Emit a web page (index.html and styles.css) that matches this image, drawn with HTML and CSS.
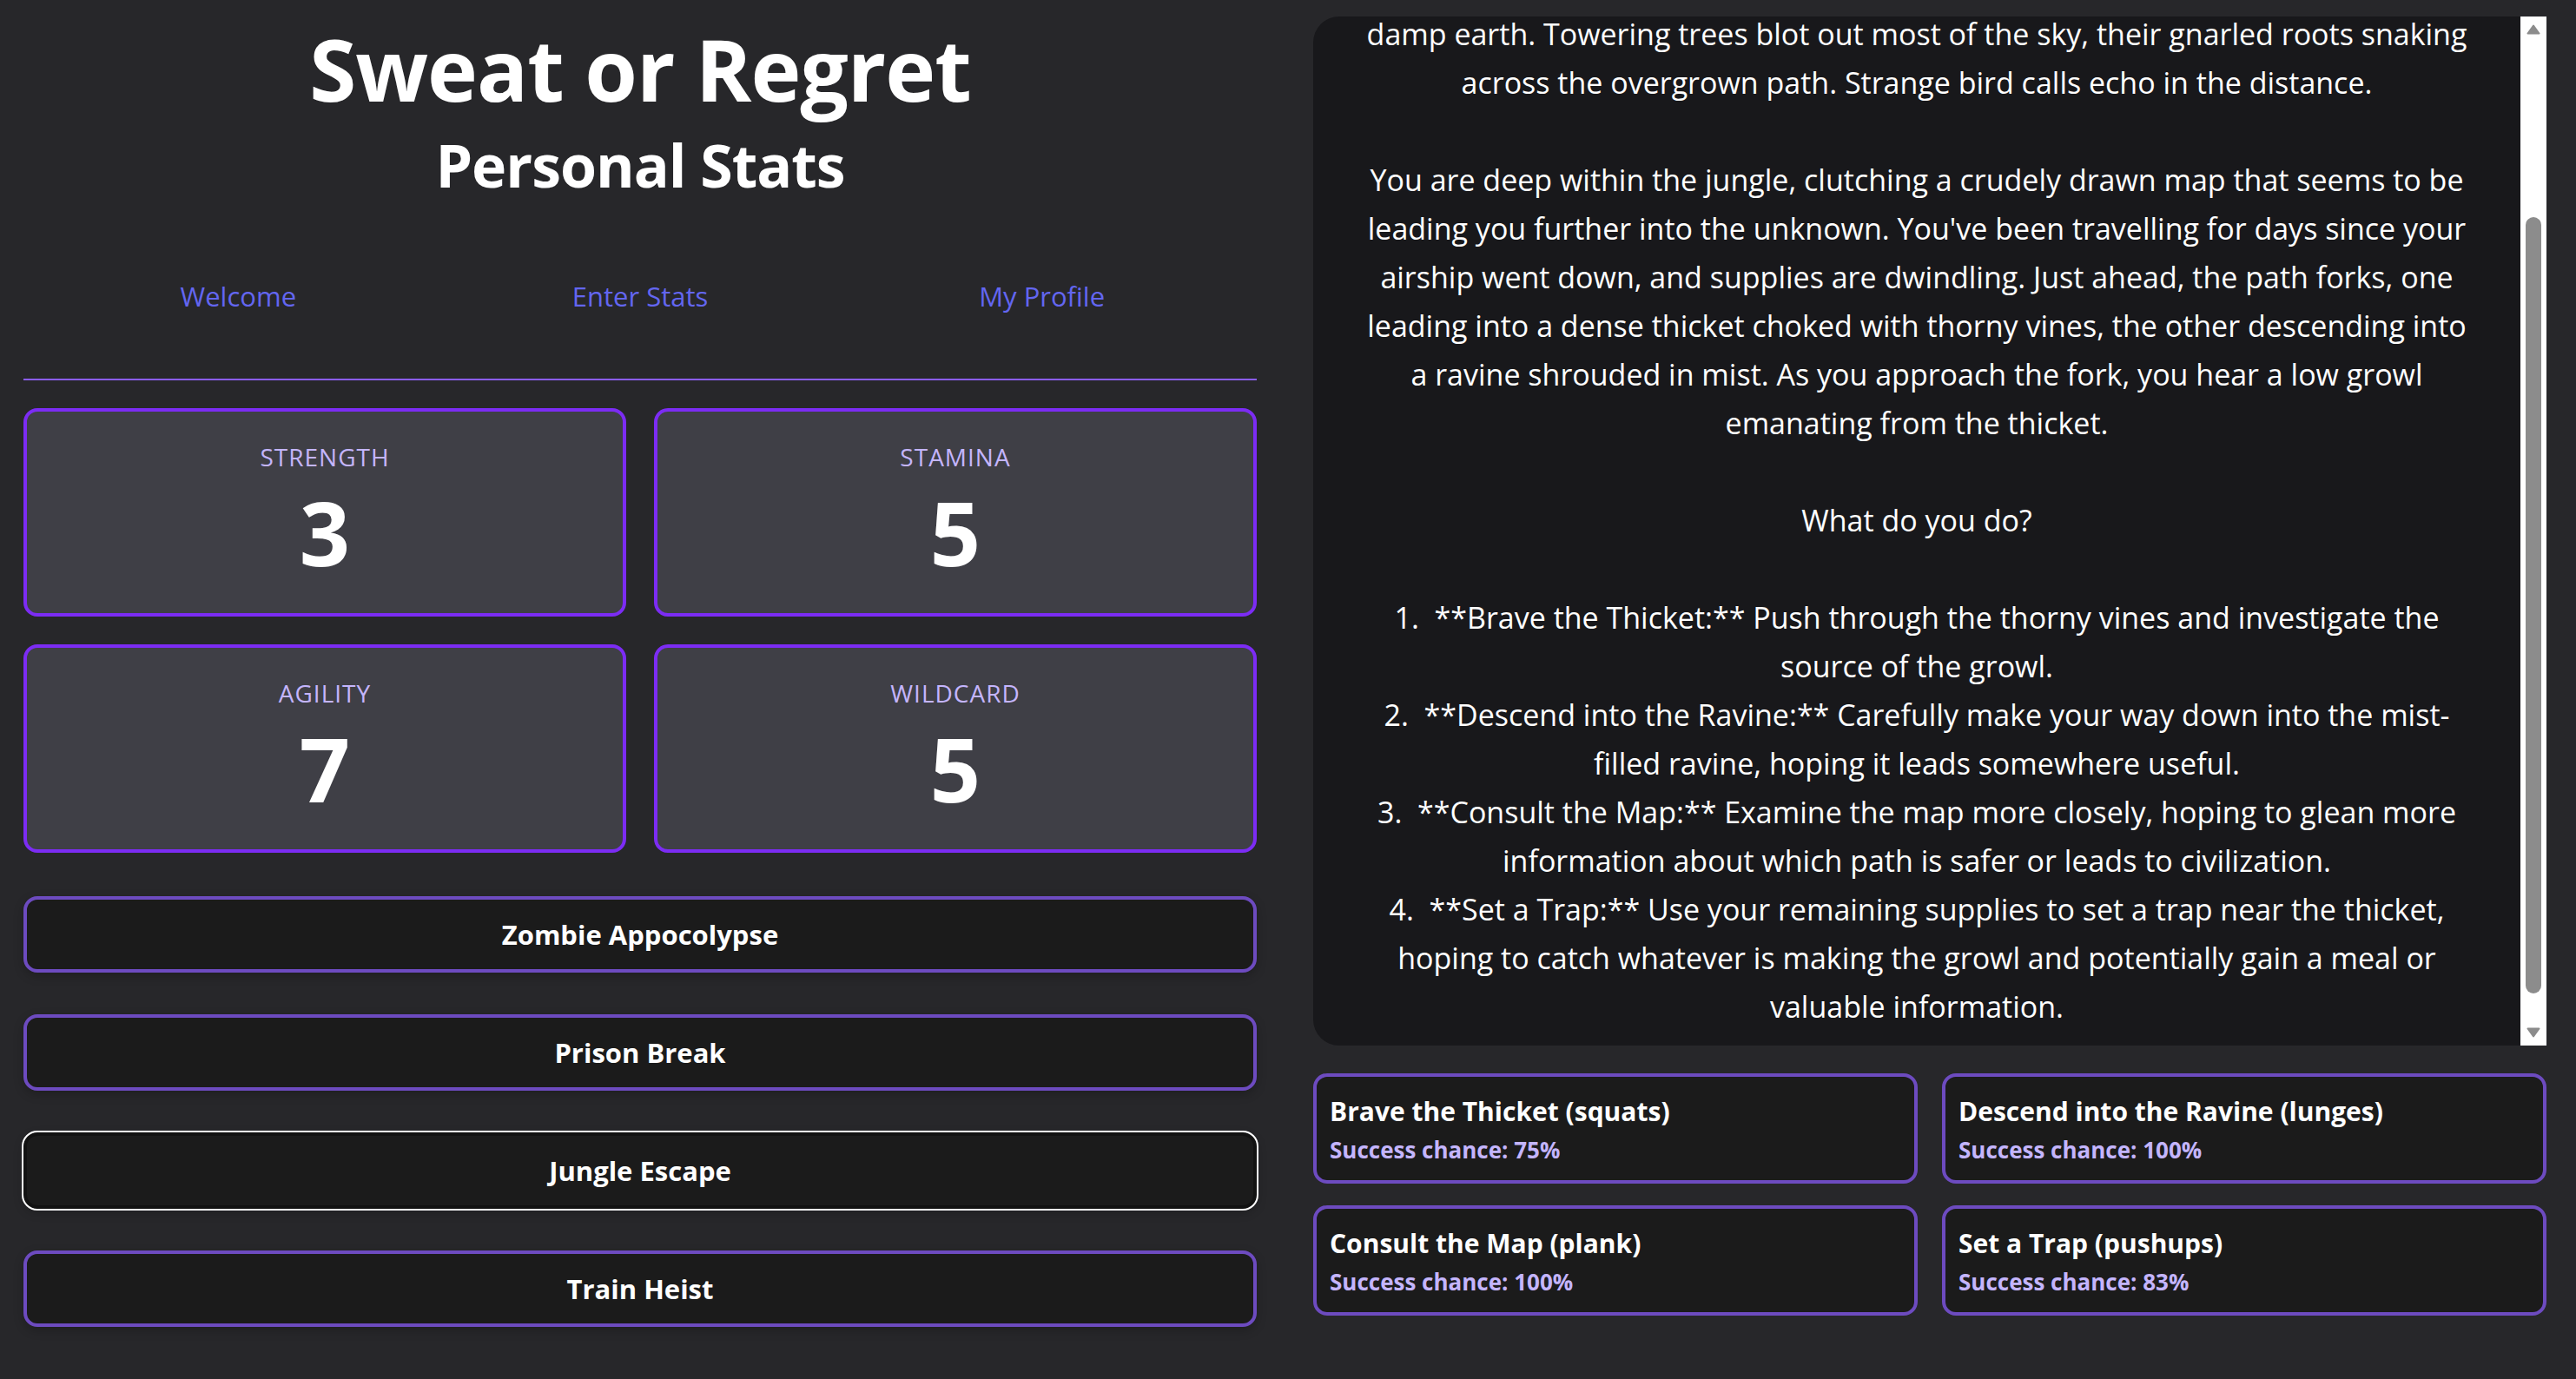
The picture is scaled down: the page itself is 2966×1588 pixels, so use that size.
FILE: index.html
```html
<!DOCTYPE html>
<html lang="en">
<head>
<meta charset="utf-8">
<title>Sweat or Regret</title>
<link rel="stylesheet" href="styles.css">
</head>
<body>
<main class="app">
  <section class="left">
    <h1 class="title">Sweat or Regret</h1>
    <h2 class="subtitle">Personal Stats</h2>
    <nav class="nav">
      <a href="#" class="nav-link">Welcome</a>
      <a href="#" class="nav-link">Enter Stats</a>
      <a href="#" class="nav-link">My Profile</a>
    </nav>
    <div class="stats">
      <div class="stat-card"><div class="stat-label">Strength</div><div class="stat-value">3</div></div>
      <div class="stat-card"><div class="stat-label">Stamina</div><div class="stat-value">5</div></div>
      <div class="stat-card"><div class="stat-label">Agility</div><div class="stat-value">7</div></div>
      <div class="stat-card"><div class="stat-label">Wildcard</div><div class="stat-value">5</div></div>
    </div>
    <div class="scenarios">
      <button class="scenario">Zombie Appocolypse</button>
      <button class="scenario">Prison Break</button>
      <button class="scenario scenario-active">Jungle Escape</button>
      <button class="scenario">Train Heist</button>
    </div>
  </section>
  <section class="right">
    <div class="story">
      <div class="story-scroll" id="story"><div class="story-text">damp earth. Towering trees blot out most of the sky, their gnarled roots snaking across the overgrown path. Strange bird calls echo in the distance.

You are deep within the jungle, clutching a crudely drawn map that seems to be leading you further into the unknown. You've been travelling for days since your airship went down, and supplies are dwindling. Just ahead, the path forks, one leading into a dense thicket choked with thorny vines, the other descending into a ravine shrouded in mist. As you approach the fork, you hear a low growl emanating from the thicket.

What do you do?

1.  **Brave the Thicket:** Push through the thorny vines and investigate the source of the growl.
2.  **Descend into the Ravine:** Carefully make your way down into the mist-filled ravine, hoping it leads somewhere useful.
3.  **Consult the Map:** Examine the map more closely, hoping to glean more information about which path is safer or leads to civilization.
4.  **Set a Trap:** Use your remaining supplies to set a trap near the thicket, hoping to catch whatever is making the growl and potentially gain a meal or valuable information.</div></div>
      <div class="scrollbar" aria-hidden="true">
        <div class="sb-button">
          <svg class="sb-arrow" width="16" height="12" viewBox="0 0 16 12"><path d="M8 1.5 L14.5 10.5 L1.5 10.5 Z" fill="#8c8c8c" stroke="#8c8c8c" stroke-width="2" stroke-linejoin="round"/></svg>
        </div>
        <div class="sb-track"><div class="sb-thumb"></div></div>
        <div class="sb-button">
          <svg class="sb-arrow" width="16" height="12" viewBox="0 0 16 12"><path d="M8 10.5 L14.5 1.5 L1.5 1.5 Z" fill="#8c8c8c" stroke="#8c8c8c" stroke-width="2" stroke-linejoin="round"/></svg>
        </div>
      </div>
    </div>
    <div class="choices">
      <div class="choice"><div class="choice-title">Brave the Thicket (squats)</div><div class="choice-chance">Success chance: 75%</div></div>
      <div class="choice"><div class="choice-title">Descend into the Ravine (lunges)</div><div class="choice-chance">Success chance: 100%</div></div>
      <div class="choice"><div class="choice-title">Consult the Map (plank)</div><div class="choice-chance">Success chance: 100%</div></div>
      <div class="choice"><div class="choice-title">Set a Trap (pushups)</div><div class="choice-chance">Success chance: 83%</div></div>
    </div>
  </section>
</main>
<script src="app.js"></script>
</body>
</html>
```
FILE: styles.css
```css
* { box-sizing: border-box; }

html, body {
  margin: 0;
  padding: 0;
  background: #27272a;
  height: 100%;
  overflow: hidden;
}

body {
  font-family: "Open Sans", "Noto Sans", sans-serif;
  color: #ffffff;
}

.app {
  display: grid;
  grid-template-columns: 1420px 1420px;
  column-gap: 65px;
  padding: 0 34px 0 27px;
}

/* ---------- left column ---------- */
.left {
  display: flex;
  flex-direction: column;
}

.title {
  margin: 19px 0 0;
  font-size: 98px;
  line-height: 120px;
  font-weight: 700;
  letter-spacing: -1px;
  text-align: center;
}

.subtitle {
  margin: 9px 0 0;
  font-size: 68px;
  line-height: 84px;
  font-weight: 700;
  letter-spacing: -1px;
  text-align: center;
}

.nav {
  display: grid;
  grid-template-columns: repeat(3, 1fr);
  padding: 87px 16px 73px;
  border-bottom: 2px solid #8b5cf6;
}

.nav-link {
  text-align: center;
  color: #6366f1;
  text-decoration: none;
  font-size: 31px;
  line-height: 44px;
  font-weight: 500;
}

.stats {
  margin-top: 32px;
  display: grid;
  grid-template-columns: 1fr 1fr;
  gap: 32px;
}

.stat-card {
  background: #3f3f46;
  border: 4px solid #7c2cf4;
  border-radius: 16px;
  padding: 32px 16px;
  text-align: center;
}

.stat-label {
  font-size: 28px;
  line-height: 40px;
  letter-spacing: 1px;
  font-weight: 500;
  text-transform: uppercase;
  color: #c4b5fd;
  margin-bottom: 6px;
}

.stat-value {
  font-size: 102px;
  line-height: 122px;
  font-weight: 700;
  color: #ffffff;
}

.scenarios {
  margin-top: 50px;
  display: flex;
  flex-direction: column;
  gap: 48px;
}

.scenario {
  height: 88px;
  width: 100%;
  background: #1b1b1b;
  border: 4px solid #6d4bc0;
  border-radius: 16px;
  color: #ffffff;
  font-family: inherit;
  font-size: 31px;
  font-weight: 700;
  box-shadow: 0 4px 12px rgba(0, 0, 0, 0.22);
  cursor: pointer;
}

.scenario-active {
  border-color: #121212;
  outline: 2px solid #ffffff;
}

/* ---------- right column ---------- */
.right {
  padding-top: 19px;
  display: flex;
  flex-direction: column;
}

.story {
  height: 1185px;
  display: flex;
  background: #18181b;
  border-radius: 30px 0 0 30px;
  overflow: hidden;
}

.story-scroll {
  flex: 1;
  overflow: hidden;
}

.story-text {
  padding: 0 53px 57px;
  white-space: pre-wrap;
  text-align: center;
  font-size: 34px;
  line-height: 56px;
  color: #ffffff;
}

.scrollbar {
  width: 30px;
  flex: none;
  display: flex;
  flex-direction: column;
  background: #ffffff;
}

.sb-button {
  height: 30px;
  flex: none;
  display: flex;
  align-items: center;
  justify-content: center;
}

.sb-track {
  flex: 1;
  display: flex;
  flex-direction: column;
  align-items: center;
}

.sb-thumb {
  width: 18px;
  height: 894px;
  margin-top: 201px;
  border-radius: 9px;
  background: #8c8c8c;
}

.choices {
  margin-top: 32px;
  display: grid;
  grid-template-columns: 1fr 1fr;
  column-gap: 28px;
  row-gap: 25px;
}

.choice {
  background: #1b1b1b;
  border: 4px solid #6d4bc0;
  border-radius: 16px;
  padding: 19px 15px 17px;
}

.choice-title {
  font-size: 30px;
  line-height: 42px;
  font-weight: 700;
  color: #ffffff;
}

.choice-chance {
  margin-top: 5px;
  font-size: 26px;
  line-height: 36px;
  font-weight: 700;
  color: #c4b5fd;
}
```
FILE: app.js
```js
document.getElementById('story').scrollTop = 8;
```
